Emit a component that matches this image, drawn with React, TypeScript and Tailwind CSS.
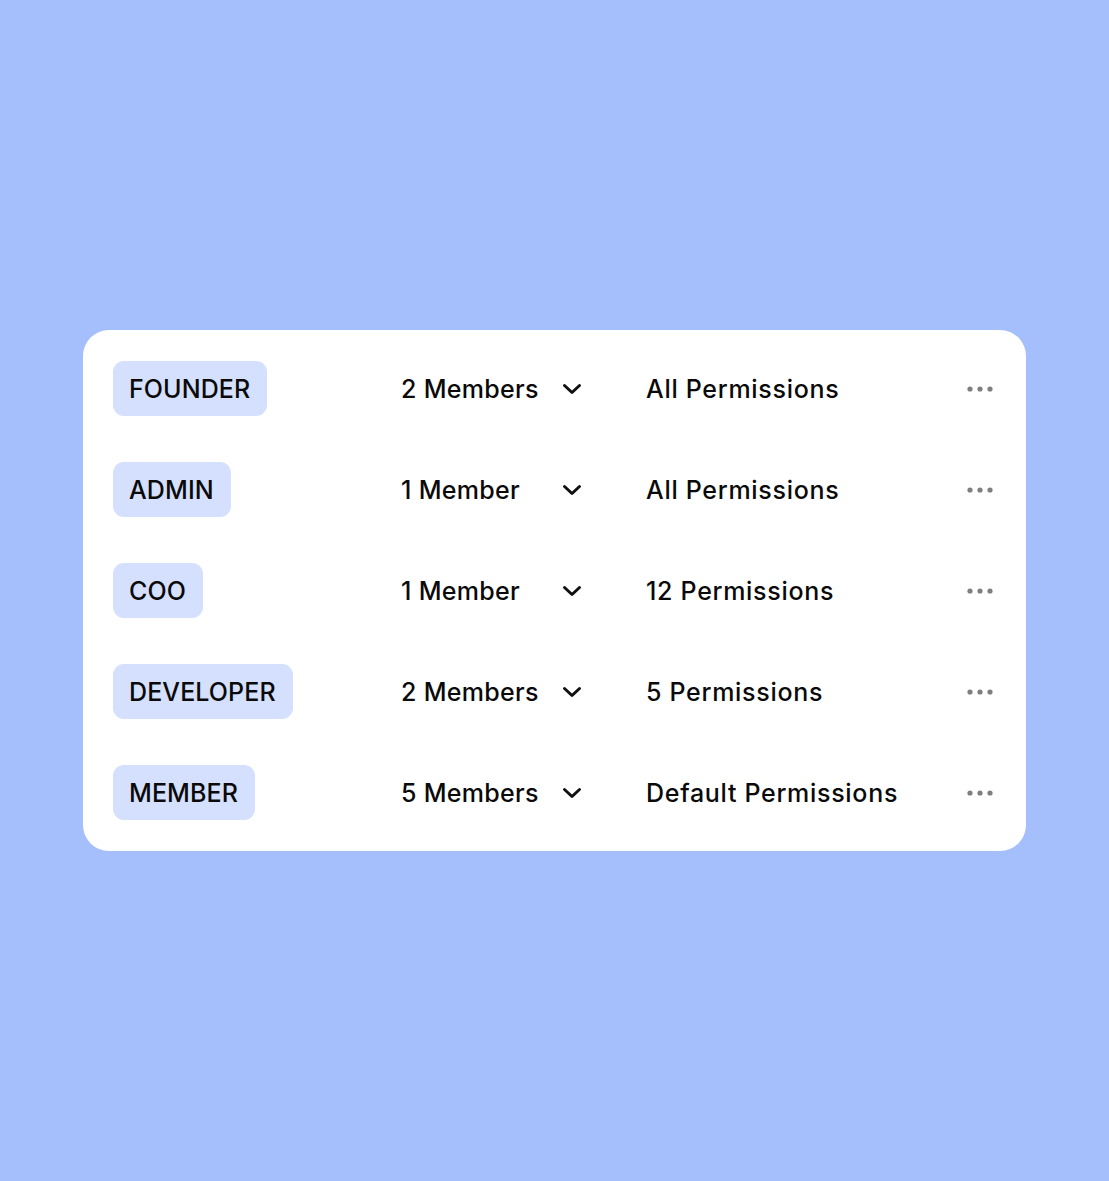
import React from "react";

const roles = [
  { name: "FOUNDER", members: "2 Members", perms: "All Permissions" },
  { name: "ADMIN", members: "1 Member", perms: "All Permissions" },
  { name: "COO", members: "1 Member", perms: "12 Permissions" },
  { name: "DEVELOPER", members: "2 Members", perms: "5 Permissions" },
  { name: "MEMBER", members: "5 Members", perms: "Default Permissions" },
];

const Chevron = () => (
  <svg width="20" height="12" viewBox="0 0 20 12" fill="none">
    <path d="M2.5 2.5 L10 9.5 L17.5 2.5" stroke="#111" strokeWidth="3" strokeLinecap="round" strokeLinejoin="round" />
  </svg>
);

const Dots = () => (
  <svg width="26" height="6" viewBox="0 0 26 6">
    <circle cx="3" cy="3" r="2.6" fill="#7f7f7f" />
    <circle cx="13" cy="3" r="2.6" fill="#7f7f7f" />
    <circle cx="23" cy="3" r="2.6" fill="#7f7f7f" />
  </svg>
);

export default function App() {
  return (
    <div
      className="w-[1109px] h-[1181px] bg-[#a5befc] flex items-center justify-center"
      style={{ fontFamily: "Inter, 'Noto Sans', sans-serif" }}
    >
      <div className="w-[943px] bg-white rounded-[26px] pl-[30px] pr-[33px] py-[31px] flex flex-col gap-[46px]">
        {roles.map((r) => (
          <div key={r.name} className="grid grid-cols-[288px_161px_84px_1fr_auto] items-center h-[55px]">
            <div>
              <span className="inline-flex items-center h-[55px] pl-4 pr-[17px] pt-[2px] rounded-[11px] bg-[#d4e0fd] text-[25px] font-medium text-[#0a0a0a] tracking-[0.1px]">
                {r.name}
              </span>
            </div>
            <span className="pt-[2px] text-[25px] font-medium text-[#0a0a0a] tracking-[0.3px]">{r.members}</span>
            <div className="flex items-center">
              <Chevron />
            </div>
            <span className="pt-[2px] text-[25px] font-medium text-[#0a0a0a] tracking-[0.7px]">{r.perms}</span>
            <Dots />
          </div>
        ))}
      </div>
    </div>
  );
}
